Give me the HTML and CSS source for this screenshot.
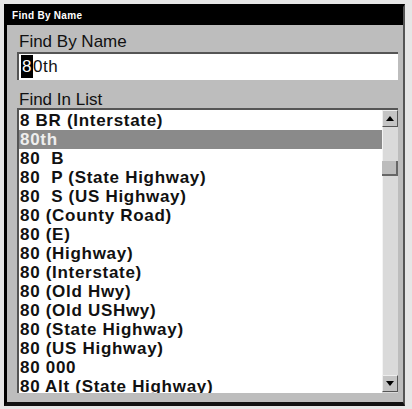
FILE: index.html
```html
<!DOCTYPE html>
<html lang="en">
<head>
    <meta charset="UTF-8">
    <title>Find By Name</title>
    <link rel="stylesheet" href="styles.css">
</head>
<body>

    <!-- Dialog window -->
    <div class="window">
        <div class="titlebar">Find By Name</div>

        <div class="panel">
            <div class="label">Find By Name</div>
            <div class="field"><span class="cursor">8</span>0th</div>

            <div class="label label-list">Find In List</div>
            <div class="listbox">
                <ul class="items">
                    <li>8 BR (Interstate)</li>
                    <li class="sel">80th</li>
                    <li>80  B</li>
                    <li>80  P (State Highway)</li>
                    <li>80  S (US Highway)</li>
                    <li>80 (County Road)</li>
                    <li>80 (E)</li>
                    <li>80 (Highway)</li>
                    <li>80 (Interstate)</li>
                    <li>80 (Old Hwy)</li>
                    <li>80 (Old USHwy)</li>
                    <li>80 (State Highway)</li>
                    <li>80 (US Highway)</li>
                    <li>80 000</li>
                    <li>80 Alt (State Highway)</li>
                </ul>

                <!-- Scrollbar -->
                <div class="scrollbar">
                    <div class="sb-btn"><span class="arrow-up"></span></div>
                    <div class="sb-track"><div class="sb-thumb"></div></div>
                    <div class="sb-btn"><span class="arrow-down"></span></div>
                </div>
            </div>
        </div>
    </div>

</body>
</html>
```

FILE: styles.css
```css
/* Page */
body {
    margin: 0;
    background-color: #e6e6e6;
    font-family: "Liberation Sans", Arial, sans-serif;
    color: #111;
}

/* Window frame */
.window {
    margin: 4px 0 0 4px;
    width: 401px;
    height: 402px;
    box-sizing: border-box;
    border-top: 3px solid #000;
    border-left: 3px solid #000;
    border-right: 2px solid #555;
    border-bottom: 4px solid #111;
    background-color: #bdbdbd;
    display: flex;
    flex-direction: column;
}

.titlebar {
    background-color: #000;
    color: #fff;
    height: 18px;
    line-height: 18px;
    font-size: 10px;
    font-weight: bold;
    letter-spacing: 0.3px;
    padding-left: 5px;
}

.panel {
    flex: 1;
    padding: 0 5px 0 10px;
    display: flex;
    flex-direction: column;
}

/* Labels */
.label {
    font-size: 17px;
    line-height: 18px;
    margin-top: 8px;
    padding-left: 2px;
}

.label-list {
    margin-top: 11px;
    line-height: 17px;
}

/* Text field */
.field {
    margin-top: 1px;
    height: 28px;
    box-sizing: border-box;
    background-color: #fff;
    border-top: 2px solid #555;
    border-left: 2px solid #555;
    padding: 1px 0 0 2px;
    font-size: 17px;
    line-height: 23px;
    letter-spacing: 0.5px;
}

.field .cursor {
    display: inline-block;
    background-color: #000;
    color: #fff;
    padding: 0 1px;
}

/* List box */
.listbox {
    height: 285px;
    box-sizing: border-box;
    background-color: #fff;
    border-top: 2px solid #555;
    border-left: 2px solid #555;
    display: flex;
    overflow: hidden;
}

.items {
    flex: 1;
    list-style: none;
    margin: 0;
    padding: 1px 0 0 0;
    font-size: 17px;
    font-weight: bold;
    line-height: 19px;
    letter-spacing: 0.7px;
    overflow: hidden;
}

.items li {
    padding-left: 1px;
    height: 19px;
    white-space: pre;
}

.items li.sel {
    background-color: #8a8a8a;
    color: #eee;
}

/* Scrollbar */
.scrollbar {
    width: 16px;
    display: flex;
    flex-direction: column;
    background-color: #dadada;
    padding-bottom: 1px;
}

.sb-btn {
    height: 17px;
    box-sizing: border-box;
    background-color: #c4c4c4;
    border: 1px solid;
    border-color: #eee #555 #555 #eee;
    display: flex;
    align-items: center;
    justify-content: center;
}

.arrow-up {
    border-left: 4px solid transparent;
    border-right: 4px solid transparent;
    border-bottom: 5px solid #000;
}

.arrow-down {
    border-left: 4px solid transparent;
    border-right: 4px solid transparent;
    border-top: 5px solid #000;
}

.sb-track {
    flex: 1;
    border-left: 1px solid #f4f4f4;
}

.sb-thumb {
    margin-top: 34px;
    height: 15px;
    box-sizing: border-box;
    background-color: #bcbcbc;
    border-right: 2px solid #666;
    border-bottom: 2px solid #666;
    margin-left: -1px;
}
```
